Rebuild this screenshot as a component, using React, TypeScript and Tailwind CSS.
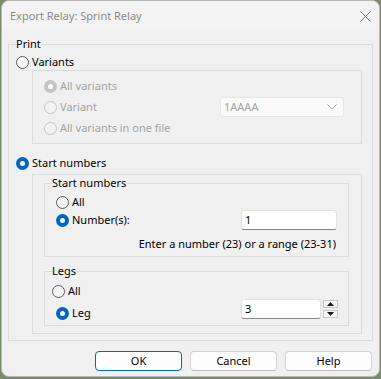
import React from 'react';

const font = { fontFamily: '"Noto Sans", "Liberation Sans", sans-serif' };

function Radio({ checked = false, disabled = false }: { checked?: boolean; disabled?: boolean }) {
  if (checked) {
    return (
      <span
        className={`flex h-[13px] w-[13px] shrink-0 items-center justify-center rounded-full ${
          disabled ? 'bg-[#c4c4c4]' : 'bg-[#0067c0]'
        }`}
      >
        <span className="h-[5px] w-[5px] rounded-full bg-white" />
      </span>
    );
  }
  return (
    <span
      className={`h-[13px] w-[13px] shrink-0 rounded-full border ${
        disabled ? 'border-[#c4c4c4] bg-[#f3f3f3]' : 'border-[#5d5d5d] bg-[#f7f7f7]'
      }`}
    />
  );
}

function RadioLabel({
  label,
  checked,
  disabled,
}: {
  label: string;
  checked?: boolean;
  disabled?: boolean;
}) {
  return (
    <div className="flex h-[16px] items-center gap-[3px]">
      <Radio checked={checked} disabled={disabled} />
      <span className={disabled ? 'text-[#a3a3a3]' : 'text-black'}>{label}</span>
    </div>
  );
}

function TextBox({ value, width }: { value: string; width: string }) {
  return (
    <div
      className={`flex h-[20px] ${width} items-center rounded-[3px] border border-[#e3e3e3] border-b-[#868686] bg-white pl-[3px] text-black`}
    >
      {value}
    </div>
  );
}

function Button({ label, primary }: { label: string; primary?: boolean }) {
  return (
    <button
      className={`flex h-[20px] w-[87px] items-center justify-center rounded-[4px] border bg-[#fdfdfd] text-black ${
        primary ? 'border-[#0067c0]' : 'border-[#d3d3d3] border-b-[#bcbcbc]'
      }`}
    >
      {label}
    </button>
  );
}

export default function App() {
  return (
    <div className="h-[379px] w-[381px] bg-[#7b8a68] pl-[1px] text-[11px] leading-[16px]" style={font}>
      <div className="flex h-[377px] w-[379px] flex-col overflow-hidden rounded-[8px] border border-[#b8b8b8] bg-[#f0f0f0]">
        {/* title bar */}
        <div className="flex h-[30px] shrink-0 items-center justify-between bg-[#f3f3f3] pl-[8px] pr-[8px]">
          <span className="text-[11px] text-[#8a8a8a]">Export Relay: Sprint Relay</span>
          <svg width="11" height="11" viewBox="0 0 11 11" className="text-[#7a7a7a]">
            <path d="M0.5 0.5 L10.5 10.5 M10.5 0.5 L0.5 10.5" stroke="currentColor" strokeWidth="1" />
          </svg>
        </div>

        {/* Print group */}
        <fieldset className="ml-[6px] mt-[5px] h-[305px] w-[365px] border border-[#dcdcdc] p-0">
          <legend className="ml-[7px] px-0 text-black">Print</legend>

          <div className="ml-[7px] mt-[2px]">
            <RadioLabel label="Variants" />
          </div>

          <div className="ml-[23px] h-[74px] w-[330px] border border-[#dcdcdc] pl-[11px]">
            <div className="mt-[7px]">
              <RadioLabel label="All variants" checked disabled />
            </div>
            <div className="mt-[3px] flex h-[20px] items-center">
              <div className="w-[176px]">
                <RadioLabel label="Variant" disabled />
              </div>
              <div className="flex h-[20px] w-[124px] items-center justify-between rounded-[3px] border border-[#e6e6e6] bg-[#fafafa] pl-[3px] pr-[6px] text-[#a3a3a3]">
                <span>1AAAA</span>
                <svg width="10" height="6" viewBox="0 0 10 6">
                  <path d="M0.5 0.5 L5 5 L9.5 0.5" stroke="#a8a8a8" strokeWidth="1" fill="none" />
                </svg>
              </div>
            </div>
            <div className="mt-[3px]">
              <RadioLabel label="All variants in one file" disabled />
            </div>
          </div>

          <div className="ml-[7px] mt-[11px]">
            <RadioLabel label="Start numbers" checked />
          </div>

          <div className="ml-[23px] mt-[3px] h-[160px] w-[330px] border border-[#dcdcdc]">
            <fieldset className="ml-[11px] h-[82px] w-[305px] border border-[#dcdcdc] p-0">
              <legend className="ml-[7px] px-0 text-black">Start numbers</legend>
              <div className="ml-[11px] mt-[3px]">
                <RadioLabel label="All" />
              </div>
              <div className="ml-[11px] flex h-[20px] items-center">
                <div className="w-[185px]">
                  <RadioLabel label="Number(s):" checked />
                </div>
                <TextBox value="1" width="w-[96px]" />
              </div>
              <div className="mt-[6px] flex justify-end pr-[12px] text-black">
                Enter a number (23) or a range (23-31)
              </div>
            </fieldset>

            <fieldset className="ml-[11px] mt-[6px] h-[63px] w-[305px] border border-[#dcdcdc] p-0">
              <legend className="ml-[7px] px-0 text-black">Legs</legend>
              <div className="ml-[7px] mt-[4px]">
                <RadioLabel label="All" />
              </div>
              <div className="ml-[11px] flex h-[20px] items-start">
                <div className="mt-[6px] w-[185px]">
                  <RadioLabel label="Leg" checked />
                </div>
                <TextBox value="3" width="w-[80px]" />
                <div className="ml-[2px] flex flex-col gap-[2px] pt-[1px]">
                  <div className="flex h-[8px] w-[15px] items-center justify-center border border-[#c8c8c8] bg-[#f7f7f7]">
                    <svg width="7" height="4" viewBox="0 0 7 4">
                      <path d="M0 4 L3.5 0 L7 4 Z" fill="#1a1a1a" />
                    </svg>
                  </div>
                  <div className="flex h-[8px] w-[15px] items-center justify-center border border-[#c8c8c8] bg-[#f7f7f7]">
                    <svg width="7" height="4" viewBox="0 0 7 4">
                      <path d="M0 0 L7 0 L3.5 4 Z" fill="#1a1a1a" />
                    </svg>
                  </div>
                </div>
              </div>
            </fieldset>
          </div>
        </fieldset>

        {/* buttons */}
        <div className="ml-[93px] mt-[10px] flex gap-[8px]">
          <Button label="OK" primary />
          <Button label="Cancel" />
          <Button label="Help" />
        </div>
      </div>
    </div>
  );
}
